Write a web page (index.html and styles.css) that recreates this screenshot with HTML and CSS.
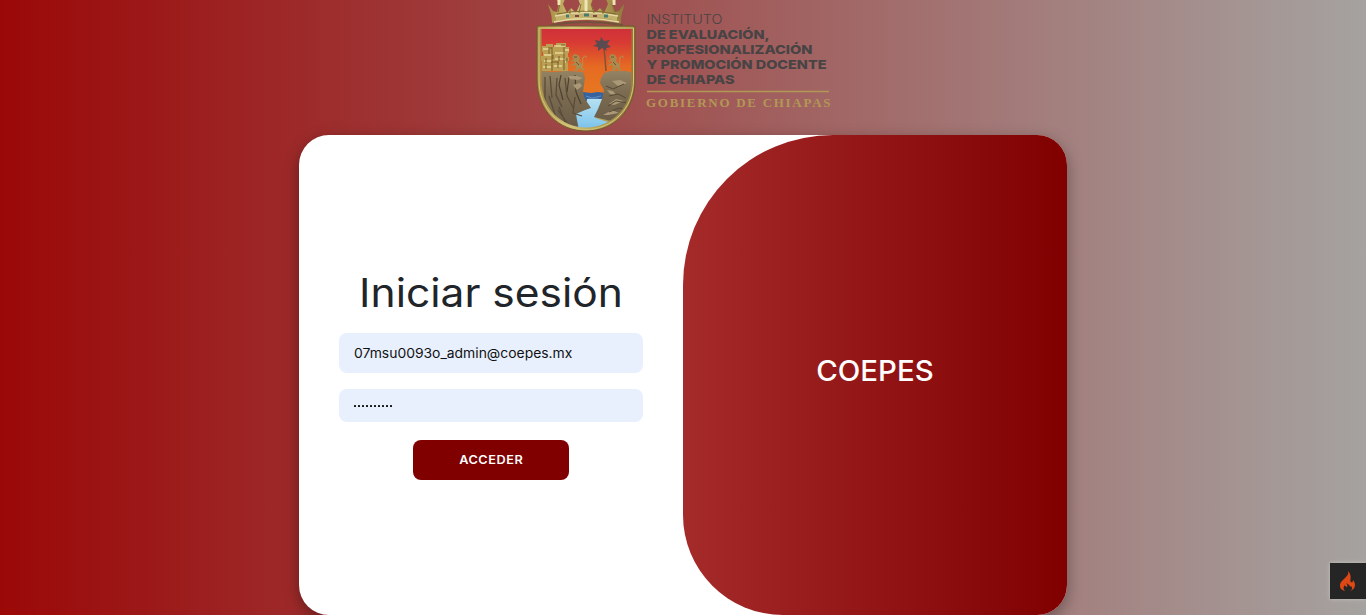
FILE: index.html
```html
<!DOCTYPE html>
<html lang="es">
<head>
<meta charset="utf-8">
<title>COEPES - Iniciar sesión</title>
<link rel="stylesheet" href="styles.css">
</head>
<body>
<header class="brand">
<svg class="brand-logo" viewBox="530 0 306 135" role="img" aria-label="Gobierno de Chiapas">
<defs>
<linearGradient id="sky" x1="0" y1="0" x2="0" y2="1"><stop offset="0" stop-color="#cf303b"/><stop offset=".22" stop-color="#d83a34"/><stop offset=".6" stop-color="#e56b22"/><stop offset="1" stop-color="#e87720"/></linearGradient>
<linearGradient id="gold" x1="0" y1="0" x2="1" y2="0"><stop offset="0" stop-color="#a58d43"/><stop offset=".35" stop-color="#d4c27a"/><stop offset=".6" stop-color="#bba75c"/><stop offset="1" stop-color="#8f7a3c"/></linearGradient>
<linearGradient id="water" x1="0" y1="0" x2="0" y2="1"><stop offset="0" stop-color="#b5e0f0"/><stop offset="1" stop-color="#7cc4ee"/></linearGradient>
<linearGradient id="rock" x1="0" y1="0" x2="0" y2="1"><stop offset="0" stop-color="#948363"/><stop offset=".4" stop-color="#7a6b51"/><stop offset="1" stop-color="#695a47"/></linearGradient>
<clipPath id="field"><path d="M541.5 29H631.5V80C631.5 108 611 127.500 586 127.500S541.500 108 541.500 80Z"/></clipPath>
<g id="lion"><path d="M1 3l2-3 4 1 2 3-1 3 3 3 1 4 2 2-3 1-2-3-3 3H3l2-3-1-3-4 1 1-2 3-1-1-2-3 1 1-2 2-1z" fill="#aa8a4e"/><path d="M3 3h3M5 8l3 3" stroke="#705530"/><path d="M10 13c3-3 1-6 2-9s4-2 3 0" fill="none" stroke="#b3935a"/></g>
</defs>
<path d="M552 23C552 13 549 9 548 4l5 7 4 1 2-9-3-4h9l-2 5 4 9 4-5 5 5 4-9-3-8h17l-3 8 4 9 5-5 4 5 4-9-2-5h9l-3 4 3 9 4-1 5-7c0 6-4 11-3 20-20-5-50-5-70-1z" fill="url(#gold)"/>
<path d="M556 16c20-5 40-5 61 0v5c-18-5-43-5-61 0z" fill="#c3b16d"/>
<path d="M555 16q31-7 63 0M554 22q32-7 65 0" fill="none" stroke="#e5d9a4" stroke-width="1.3"/>
<path d="M551 25q35-6 72 0" fill="none" stroke="#71523a" stroke-width="2"/>
<path d="M557 14q29-6 59 0M560 3l-2 9m12-4v6m11-10-2 9m12-9 3 9m9-5v6m9-10 3 8" fill="none" stroke="#806b32"/>
<path d="M559 0v5m27-5v11m28-11v5" stroke="#efe4b4" stroke-width="3"/>
<path d="M566 16h3m15-1h5m15 1h4" stroke="#457c73" stroke-width="3"/>
<path d="M575 16h4m14 0h4" stroke="#7d463e" stroke-width="2"/>
<path d="M537 26H635V80C635 111 613 131 586 131S537 111 537 80Z" fill="url(#gold)" stroke="#745a29"/>
<path d="M539 28H633.500V80C633.500 110 611 129.500 586 129.500S539 110 539 80Z" fill="none" stroke="#d6c77b"/>
<g clip-path="url(#field)">
<path d="M540 28h92v65h-92z" fill="url(#sky)"/>
<path d="M583 92l8 1 7-1 7 1v8h-22z" fill="#3663a0"/><path d="M586 96l6 2 9-2m-13 3h11" stroke="#5f8ec0" fill="none"/>
<path d="M587 99h18l-5 10-5 9 13 4v7h-33v-15l11-5z" fill="url(#water)"/>
<path d="M541 71l12 1 15-1 15 1 2 6-2 14 2 7 6 9-6 2-9 4 1 6 2 10h-39z" fill="url(#rock)"/>
<path d="M601 78l3-5 7-2h15l7 2v41l-17 12-5-5-17-4 4-8 4-10 2-9-4-7z" fill="url(#rock)"/>
<path d="M545 77v24m5-25 2 22m5-20-1 17 6 12m3-29 2 18 7 13m-15-2 6 15m10-25-2 16 9 3m-24-6 9 13m-18-27 7 22" stroke="#5b4c3a" stroke-width="1.3" fill="none"/>
<path d="M561 75l-2 10 4 15m6-23-2 15m8-17 1 17 5 12" stroke="#4e402f" stroke-width="1.2" fill="none"/>
<path d="M568 76h9l6 2-5 2-8-1zm5 9 7-2 2 3-5 4zm39-4 8-1 7 3-9 3zm-5 9 6 1 3 4-6-1zm2 14 7-5 8 2-10 4zm-6 11 9-5 7 3-11 2z" fill="#ab9876"/>
<path d="M606 86l7 3 11-5m-15 12 9-2 8 4m-18 8 8-5 12 2m-19 9 10-4 8 2" fill="none" stroke="#584934"/>
</g>
<path d="M542 46h4v-2h7v3h3v-4h10v4h3v6h-1v4h1v4h-1v10h-26V61h-1v-5h2v-4h-1z" fill="#bba054"/>
<path d="M543 49h6m5-3h11m0 4h4m-25 5h8m3-2h10m-21 8h8m3-2h10m0 3h3m-25 5h8m3-1h8" stroke="#e7d997" stroke-width="1.5"/>
<path d="M552 47v24m12-24v23m-15-21v5m-3 4v5m13-7v5m-6-6v4m14-1v5m-21 1v5m12-7v6m-10-20h4m9-3h4m-14 17h8" stroke="#765c2b"/>
<use href="#lion" x="571" y="54"/><use href="#lion" x="608" y="54"/>
<path d="M604 49l1 9 1 13" fill="none" stroke="#79543b" stroke-width="1.5"/>
<path d="M601 37l3 4 6-1-3 4 4 3-5 1 1 3-5-3-4 3v-4l-5-1 4-2-2-4 5 1z" fill="#594b50"/>
<g class="agency">
<text class="agency-light" x="646.5" y="24" textLength="76" lengthAdjust="spacingAndGlyphs">INSTITUTO</text>
<text x="646.5" y="39" textLength="123" lengthAdjust="spacingAndGlyphs">DE EVALUACIÓN,</text>
<text x="646.5" y="54" textLength="166" lengthAdjust="spacingAndGlyphs">PROFESIONALIZACIÓN</text>
<text x="646.5" y="69" textLength="180" lengthAdjust="spacingAndGlyphs">Y PROMOCIÓN DOCENTE</text>
<text x="646.5" y="84" textLength="88" lengthAdjust="spacingAndGlyphs">DE CHIAPAS</text>
</g>
<path d="M647 91.5H829" stroke="#b29755" stroke-width="1.5"/>
<text class="government" x="646" y="107" textLength="184.500">GOBIERNO DE CHIAPAS</text>
</svg>
</header>
<main class="card">
<form class="login">
<h1 class="title"><span class="title-text">Iniciar sesión</span></h1>
<div class="field field-user"><span class="field-text">07msu0093o_admin@coepes.mx</span></div>
<div class="field field-password" aria-label="Contraseña"><i class="dot"></i><i class="dot"></i><i class="dot"></i><i class="dot"></i><i class="dot"></i><i class="dot"></i><i class="dot"></i><i class="dot"></i><i class="dot"></i><i class="dot"></i></div>
<button class="submit" type="button"><span class="submit-text">ACCEDER</span></button>
</form>
<section class="panel"><span class="panel-title">COEPES</span></section>
</main>
<aside class="debug">
<svg class="flame" viewBox="0 0 18 22" aria-hidden="true"><path d="M9 1c1 3-1 5-3 7-3 3-5 4-5 8 0 3 2 4 5 5-2-2-2-4 0-6 0 1 1 2 2 2 1-2 0-3-1-4 3 1 4 3 4 4l1-1c2 2 1 4-1 5 3-1 5-3 5-6 0-2-1-4-2-5 0 2-1 3-2 2-2-1 2-6-3-11z"/></svg>
</aside>
</body>
</html>
```

FILE: styles.css
```css
* { box-sizing: border-box; }
body {
  margin: 0;
  height: 615px;
  overflow: hidden;
  display: flex;
  flex-direction: column;
  align-items: center;
  background: linear-gradient(to right, #9b0808, #a5a2a0);
  font-family: Inter, "Open Sans", sans-serif;
}
.brand { height: 135px; }
.brand-logo { display: block; width: 306px; height: 135px; }
.agency { font: 800 12.4px Inter, sans-serif; fill: #484344; }
.agency-light { font-weight: 300; }
.government { font: 600 13px "Liberation Serif", serif; fill: #b29755; }
.card {
  width: 768px;
  height: 480px;
  display: flex;
  overflow: hidden;
  border-radius: 30px;
  background: #fff;
  box-shadow: 0 5px 15px rgba(0, 0, 0, .35);
}
.login {
  width: 384px;
  padding: 134px 40px 0;
  display: flex;
  flex-direction: column;
  align-items: center;
}
.title {
  margin: 0 0 16px;
  height: 48px;
  display: flex;
  justify-content: center;
  font-weight: 400;
  font-size: 39px;
  line-height: 48px;
  color: #212529;
  white-space: nowrap;
}
.title-text { transform: scaleX(1.09); }
.field {
  width: 304px;
  padding: 0 15px;
  display: flex;
  align-items: center;
  border-radius: 8px;
  background: #e8f0fe;
  font-size: 13px;
  color: #111;
}
.field-user { height: 40px; margin-bottom: 16px; padding-bottom: 1px; }
.field-text { transform: scaleX(1.069); transform-origin: left; }
.field-password { height: 33px; margin-bottom: 18px; padding-top: 1px; gap: 2px; }
.dot { width: 2px; height: 2px; border-radius: .5px; background: #111; }
.submit {
  width: 156px;
  height: 40px;
  padding: 0;
  border: 0;
  border-radius: 8px;
  background: #800000;
  color: #fff;
  font: 600 12px/40px Inter, sans-serif;
}
.submit-text { display: inline-block; letter-spacing: .5px; transform: scaleX(1.06); }
.panel {
  width: 384px;
  display: flex;
  align-items: center;
  justify-content: center;
  padding-bottom: 9px;
  border-radius: 150px 0 0 100px;
  background: linear-gradient(to right, #a52a2a, #800000);
  color: #fff;
}
.panel-title { font-size: 28px; font-weight: 500; line-height: 34px; transform: scaleX(1.05); }
.debug {
  position: fixed;
  right: 0;
  bottom: 16px;
  width: 36px;
  height: 36px;
  display: flex;
  align-items: center;
  justify-content: center;
  background: #252525;
  box-shadow: 0 0 4px #c8c4bf;
}
.flame { width: 18px; height: 22px; fill: #dd4814; }
```
